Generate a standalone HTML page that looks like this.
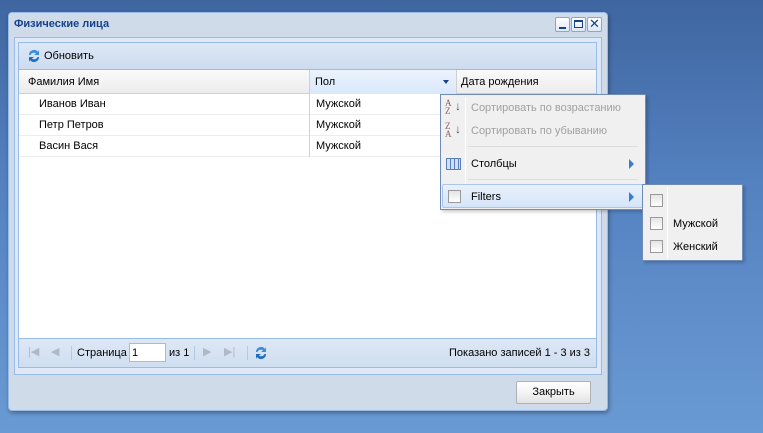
<!DOCTYPE html>
<html><head><meta charset="utf-8"><style>
*{box-sizing:border-box;margin:0;padding:0}
body{width:763px;height:433px;overflow:hidden;position:relative;background:linear-gradient(180deg,#3f66a0 0%,#5583c2 45%,#6a9ad3 100%);font-family:"Liberation Sans",sans-serif;font-size:11px;color:#000}
.abs{position:absolute}
.win{left:8px;top:12px;width:600px;height:399px;background:#cfdbe8;border:1px solid #99bbe8;border-radius:4px;box-shadow:1px 2px 4px rgba(0,0,0,.35)}
.title{left:14px;top:18px;font-weight:bold;color:#15428b;font-size:11px}
.tb{width:15px;height:15px;top:17px;border:1px solid #8ab;border-radius:2px;background:linear-gradient(#fff,#dde8f5)}
.body{left:14px;top:37px;width:588px;height:338px;background:#dfe8f6;border:1px solid #99bbe8}
.panel{left:18px;top:42px;width:579px;height:326px;background:#fff;border:1px solid #99bbe8}
.toolbar{left:19px;top:43px;width:577px;height:27px;background:linear-gradient(#dde8f6,#cddcef);border-bottom:1px solid #99bbe8}
.hdr{left:19px;top:70px;width:577px;height:24px;background:linear-gradient(#fafafa,#ececec);border-bottom:1px solid #d0d0d0}
.row{left:19px;width:577px;height:21px;border-bottom:1px solid #ededed}
.cell{position:absolute;top:4px}
.vl{position:absolute;top:0;width:1px;height:21px;background:#d0d0d0}
.page{left:19px;top:338px;width:577px;height:29px;background:linear-gradient(#dde8f6,#cfdef0);border-top:1px solid #99bbe8}
.menu{left:440px;top:94px;width:206px;height:116px;background:#f0f0f0;border:1px solid #718bb7;box-shadow:2px 2px 3px rgba(0,0,0,.2)}
.sub{left:642px;top:184px;width:101px;height:77px;background:#f0f0f0;border:1px solid #718bb7;box-shadow:2px 2px 3px rgba(0,0,0,.2)}
.cb{position:absolute;width:13px;height:13px;border:1px solid #999;background:linear-gradient(#e4e4e4,#fff)}
.gray{color:#a0a0a0}
.arr{position:absolute;width:0;height:0;border-left:5px solid #3a7ad0;border-top:5px solid transparent;border-bottom:5px solid transparent}
.sep{position:absolute;width:1px;height:14px;background:#b5c8e0}
</style></head><body>
<div class="abs win"></div>
<div class="abs title">Физические лица</div>
<div class="abs tb" style="left:555px"><div class="abs" style="left:3px;top:9px;width:7px;height:2px;background:#15428b"></div></div>
<div class="abs tb" style="left:571px"><div class="abs" style="left:2px;top:2px;width:9px;height:8px;border:1px solid #15428b;border-top-width:2px"></div></div>
<div class="abs tb" style="left:587px;font-size:13px;line-height:12px;text-align:center;color:#15428b">✕</div>
<div class="abs body"></div>
<div class="abs panel"></div>
<div class="abs toolbar"></div>
<svg class="abs" style="left:26px;top:48px" width="16" height="16" viewBox="0 0 16 16"><path d="M3 7a5 5 0 0 1 9-3l1-2v5H8l2-1.5A3.5 3.5 0 0 0 4.5 7z" fill="#3a8ee0"/><path d="M13 9a5 5 0 0 1-9 3l-1 2V9h5l-2 1.5A3.5 3.5 0 0 0 11.5 9z" fill="#1f6fc0"/></svg>
<div class="abs" style="left:44px;top:50px">Обновить</div>
<div class="abs hdr">
 <div class="cell" style="left:9px;top:6px">Фамилия Имя</div>
 <div class="abs" style="left:290px;top:0;width:1px;height:24px;background:#d0d0d0"></div>
 <div class="abs" style="left:291px;top:0;width:147px;height:24px;background:linear-gradient(#ebf3fd,#d9e8fb)"></div>
 <div class="cell" style="left:296px;top:6px">Пол</div>
 <div class="abs" style="left:424px;top:10px;border-top:4px solid #15428b;border-left:3.5px solid transparent;border-right:3.5px solid transparent"></div>
 <div class="abs" style="left:437px;top:0;width:1px;height:24px;background:#d0d0d0"></div>
 <div class="cell" style="left:442px;top:6px">Дата рождения</div>
</div>
<div class="abs row" style="top:94px"><div class="cell" style="left:20px">Иванов Иван</div><div class="vl" style="left:290px"></div><div class="cell" style="left:297px">Мужской</div></div>
<div class="abs row" style="top:115px"><div class="cell" style="left:20px">Петр Петров</div><div class="vl" style="left:290px"></div><div class="cell" style="left:297px">Мужской</div></div>
<div class="abs row" style="top:136px"><div class="cell" style="left:20px">Васин Вася</div><div class="vl" style="left:290px"></div><div class="cell" style="left:297px">Мужской</div></div>
<div class="abs page">
 <div class="abs gray" style="left:9px;top:6px;font-size:11px;color:#b0b8c4">|◀</div>
 <div class="abs" style="left:32px;top:6px;color:#b0b8c4">◀</div>
 <div class="sep" style="left:52px;top:7px"></div>
 <div class="abs" style="left:58px;top:8px">Страница</div>
 <div class="abs" style="left:110px;top:4px;width:37px;height:19px;background:#fff;border:1px solid #b5b8c8;padding:3px 2px">1</div>
 <div class="abs" style="left:150px;top:8px">из 1</div>
 <div class="sep" style="left:175px;top:7px"></div>
 <div class="abs" style="left:184px;top:6px;color:#b0b8c4">▶</div>
 <div class="abs" style="left:205px;top:6px;color:#b0b8c4">▶|</div>
 <div class="sep" style="left:228px;top:7px"></div>
 <svg class="abs" style="left:234px;top:6px" width="16" height="16" viewBox="0 0 16 16"><path d="M3 7a5 5 0 0 1 9-3l1-2v5H8l2-1.5A3.5 3.5 0 0 0 4.5 7z" fill="#3a8ee0"/><path d="M13 9a5 5 0 0 1-9 3l-1 2V9h5l-2 1.5A3.5 3.5 0 0 0 11.5 9z" fill="#1f6fc0"/></svg>
 <div class="abs" style="right:6px;top:8px">Показано записей 1 - 3 из 3</div>
</div>
<div class="abs" style="left:516px;top:381px;width:75px;height:23px;border:1px solid #b0b0b0;border-radius:2px;background:linear-gradient(#fff 0%,#f4f4f4 50%,#e2e2e2 100%);text-align:center;line-height:21px">Закрыть</div>

<div class="abs menu">
 <div class="abs" style="left:24px;top:2px;width:1px;height:110px;background:#e0e0e0;border-right:1px solid #fff"></div>
 <div class="abs" style="left:4px;top:4px;font-family:'Liberation Serif',serif;font-size:9px;line-height:8px;color:#8a6060">A<br>Z</div><div class="abs" style="left:14px;top:4px;color:#555;font-size:12px">↓</div>
 <div class="abs gray" style="left:30px;top:7px">Сортировать по возрастанию</div>
 <div class="abs" style="left:4px;top:27px;font-family:'Liberation Serif',serif;font-size:9px;line-height:8px;color:#8a6060">Z<br>A</div><div class="abs" style="left:14px;top:27px;color:#555;font-size:12px">↓</div>
 <div class="abs gray" style="left:30px;top:30px">Сортировать по убыванию</div>
 <div class="abs" style="left:27px;top:51px;width:170px;height:1px;background:#ddd"></div>
 <div class="abs" style="left:5px;top:63px;width:15px;height:12px;border:1px solid #5a7fb8;background:repeating-linear-gradient(90deg,#cfe0f5 0 3px,#5a7fb8 3px 4px)"></div>
 <div class="abs" style="left:30px;top:63px">Столбцы</div>
 <div class="arr" style="left:188px;top:64px"></div>
 <div class="abs" style="left:27px;top:84px;width:170px;height:1px;background:#ddd"></div>
 <div class="abs" style="left:1px;top:89px;width:202px;height:24px;background:linear-gradient(#e8f1fc,#d5e5f9);border:1px solid #a8c6ee;border-radius:2px"></div>
 <div class="cb" style="left:7px;top:95px"></div>
 <div class="abs" style="left:30px;top:96px">Filters</div>
 <div class="arr" style="left:188px;top:97px"></div>
</div>
<div class="abs sub">
 <div class="abs" style="left:24px;top:2px;width:1px;height:71px;background:#e0e0e0;border-right:1px solid #fff"></div>
 <div class="cb" style="left:7px;top:9px"></div>
 <div class="cb" style="left:7px;top:32px"></div><div class="abs" style="left:30px;top:33px">Мужской</div>
 <div class="cb" style="left:7px;top:55px"></div><div class="abs" style="left:30px;top:56px">Женский</div>
</div>
</body></html>
